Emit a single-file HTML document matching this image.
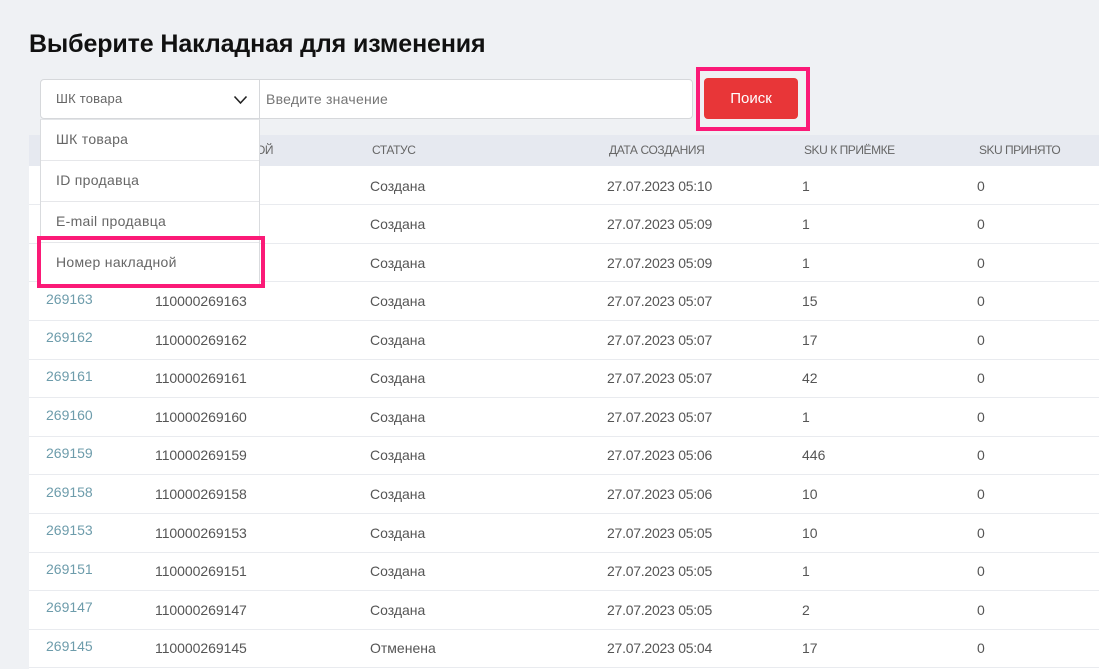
<!DOCTYPE html>
<html lang="ru"><head><meta charset="utf-8"><title>Выберите Накладная для изменения</title>
<style>
html,body{margin:0;padding:0}
body{width:1099px;height:669px;overflow:hidden;background:#eff1f4;font-family:"Liberation Sans",sans-serif;position:relative;color:#555}
.a{position:absolute;white-space:nowrap}
h1{position:absolute;left:29px;top:29px;margin:0;font-size:25px;line-height:30px;font-weight:bold;color:#111;white-space:nowrap;letter-spacing:-.12px}
.thead{position:absolute;left:29px;top:135px;width:1070px;height:31px;background:#e6e9f0}
.tbody{position:absolute;left:29px;top:166px;width:1070px;height:503px;background:#fff}
.th{position:absolute;top:143px;font-size:12px;line-height:14px;color:#666;white-space:nowrap;letter-spacing:-.4px}
.l{position:absolute;left:29px;width:1070px;height:1px;background:#e9ebef}
.r{position:absolute;left:29px;width:1070px;height:39px}
.r span{position:absolute;top:11px;line-height:18px;font-size:14px;color:#555;white-space:nowrap}
.r .id{left:17px;top:9px;color:#6d9cab}
.r .n{left:126px;letter-spacing:-.05px}
.r .s{left:341px}
.r .d{left:578px;letter-spacing:-.25px}
.r .k{left:773px}
.r .z{left:948px}
.sel{position:absolute;left:40px;top:79px;width:218px;height:38px;background:#fff;border:1px solid #d6d8db;border-radius:4px 0 0 4px}
.inp{position:absolute;left:259px;top:79px;width:432px;height:38px;background:#fff;border:1px solid #d6d8db;border-radius:0 4px 4px 0}
.menu{position:absolute;left:40px;top:119px;width:218px;height:165px;background:#fff;border:1px solid #d9dbde;border-top:1px solid #e3e5e8;box-sizing:content-box}
.it{position:absolute;left:0;width:218px;height:40px;border-bottom:1px solid #e6e7ea}
.t{position:absolute;left:56px;font-size:14px;line-height:18px;color:#666;white-space:nowrap}
.btn{position:absolute;left:704px;top:78px;width:94px;height:41px;background:#e83638;border-radius:4px;color:#fff;font-size:15px;line-height:42px;text-align:center}
.pink{position:absolute;border:4px solid #fb1a77;box-sizing:border-box}
</style></head><body>
<h1>Выберите Накладная для изменения</h1>
<div class="thead"></div>
<div class="tbody"></div>
<div class="th" style="left:372px">СТАТУС</div>
<div class="th" style="left:609px">ДАТА СОЗДАНИЯ</div>
<div class="th" style="left:804px;letter-spacing:-.45px">SKU К ПРИЁМКЕ</div>
<div class="th" style="left:979px;letter-spacing:-.5px">SKU ПРИНЯТО</div>
<div class="th" style="left:256px">ОЙ</div>

<div class="l" style="top:204px"></div><div class="l" style="top:243px"></div><div class="l" style="top:281px"></div><div class="l" style="top:320px"></div><div class="l" style="top:359px"></div><div class="l" style="top:397px"></div><div class="l" style="top:436px"></div><div class="l" style="top:474px"></div><div class="l" style="top:513px"></div><div class="l" style="top:552px"></div><div class="l" style="top:590px"></div><div class="l" style="top:629px"></div><div class="l" style="top:667px"></div>

<div class="r" style="top:166px"><span class="s">Создана</span><span class="d">27.07.2023 05:10</span><span class="k">1</span><span class="z">0</span></div>
<div class="r" style="top:204px"><span class="s">Создана</span><span class="d">27.07.2023 05:09</span><span class="k">1</span><span class="z">0</span></div>
<div class="r" style="top:243px"><span class="s">Создана</span><span class="d">27.07.2023 05:09</span><span class="k">1</span><span class="z">0</span></div>
<div class="r" style="top:281px"><span class="id">269163</span><span class="n">110000269163</span><span class="s">Создана</span><span class="d">27.07.2023 05:07</span><span class="k">15</span><span class="z">0</span></div>
<div class="r" style="top:320px"><span class="id" style="top:8px">269162</span><span class="n">110000269162</span><span class="s">Создана</span><span class="d">27.07.2023 05:07</span><span class="k">17</span><span class="z">0</span></div>
<div class="r" style="top:358px"><span class="id">269161</span><span class="n">110000269161</span><span class="s">Создана</span><span class="d">27.07.2023 05:07</span><span class="k">42</span><span class="z">0</span></div>
<div class="r" style="top:397px"><span class="id">269160</span><span class="n">110000269160</span><span class="s">Создана</span><span class="d">27.07.2023 05:07</span><span class="k">1</span><span class="z">0</span></div>
<div class="r" style="top:435px"><span class="id">269159</span><span class="n">110000269159</span><span class="s">Создана</span><span class="d">27.07.2023 05:06</span><span class="k">446</span><span class="z">0</span></div>
<div class="r" style="top:474px"><span class="id">269158</span><span class="n">110000269158</span><span class="s">Создана</span><span class="d">27.07.2023 05:06</span><span class="k">10</span><span class="z">0</span></div>
<div class="r" style="top:513px"><span class="id" style="top:8px">269153</span><span class="n">110000269153</span><span class="s">Создана</span><span class="d">27.07.2023 05:05</span><span class="k">10</span><span class="z">0</span></div>
<div class="r" style="top:551px"><span class="id">269151</span><span class="n">110000269151</span><span class="s">Создана</span><span class="d">27.07.2023 05:05</span><span class="k">1</span><span class="z">0</span></div>
<div class="r" style="top:590px"><span class="id" style="top:8px">269147</span><span class="n">110000269147</span><span class="s">Создана</span><span class="d">27.07.2023 05:05</span><span class="k">2</span><span class="z">0</span></div>
<div class="r" style="top:628px"><span class="id">269145</span><span class="n">110000269145</span><span class="s">Отменена</span><span class="d">27.07.2023 05:04</span><span class="k">17</span><span class="z">0</span></div>

<div class="inp"></div>
<div class="a" style="left:266px;top:90px;font-size:14px;line-height:18px;color:#757575;letter-spacing:.25px">Введите значение</div>
<div class="sel"></div>
<div class="t" style="top:90px;font-size:13px;letter-spacing:.2px">ШК товара</div>
<svg class="a" style="left:233px;top:95px" width="15" height="10" viewBox="0 0 15 10"><path d="M1.5 1.5 L7.5 8 L13.5 1.5" fill="none" stroke="#222" stroke-width="1.6"/></svg>

<div class="menu">
<div class="it" style="top:0"></div>
<div class="it" style="top:41px"></div>
<div class="it" style="top:82px"></div>
</div>
<div class="t" style="top:130px;letter-spacing:.3px">ШК товара</div>
<div class="t" style="top:171px;letter-spacing:.3px">ID продавца</div>
<div class="t" style="top:212px;letter-spacing:.3px">E-mail продавца</div>
<div class="t" style="top:253px;letter-spacing:.3px">Номер накладной</div>
<div class="pink" style="left:37px;top:236px;width:228px;height:52px"></div>

<div class="btn">Поиск</div>
<div class="pink" style="left:696px;top:67px;width:114px;height:64px"></div>
</body></html>
